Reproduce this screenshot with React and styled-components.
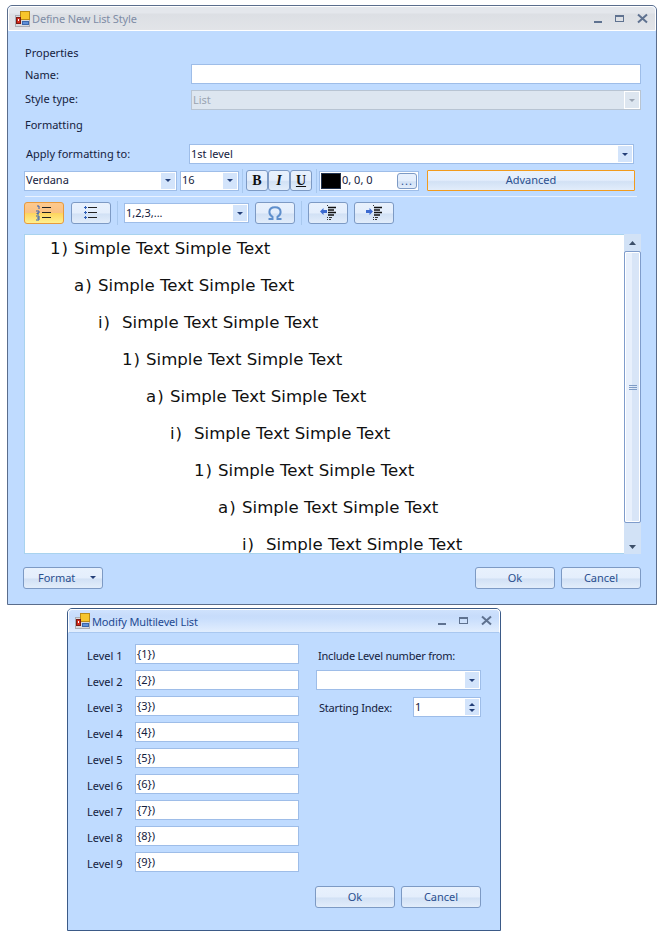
import React from "react";
import styled, { createGlobalStyle } from "styled-components";

const GlobalStyle = createGlobalStyle`
    html, body {
        margin: 0;
        padding: 0;
        background: #fff;
    }
    body {
        font-family: "Noto Sans", "Liberation Sans", sans-serif;
        font-size: 11px;
        color: #15233f;
    }
    * {
        box-sizing: border-box;
    }
`;

const Page = styled.div`
    width: 664px;
    height: 942px;
    padding-top: 5px;
    overflow: hidden;
`;

const Win = styled.div`
    width: ${(p) => p.$w}px;
    height: ${(p) => p.$h}px;
    margin-left: ${(p) => p.$x}px;
    margin-top: ${(p) => p.$top || 0}px;
    background: #bfdbff;
    border: 1px solid ${(p) => (p.$inactive ? "#5a6d8c" : "#3b5a87")};
    border-top-left-radius: 5px;
    border-top-right-radius: 5px;
    display: flex;
    flex-direction: column;
`;

const TitleBar = styled.div`
    height: ${(p) => p.$h}px;
    flex: none;
    display: flex;
    align-items: center;
    padding: 0 5px 0 6px;
    border: 1px solid #fff;
    border-bottom: 1px solid ${(p) => (p.$inactive ? "#fff" : "#a9c8f0")};
    border-top-left-radius: 4px;
    border-top-right-radius: 4px;
    background: ${(p) =>
        p.$inactive
            ? "linear-gradient(#e4e7ec 0, #e4e7ec 6px, #dcdfe4 7px, #e2e4e8 100%)"
            : "linear-gradient(#cfe2fd 0, #c7dcfb 6px, #c9defc 40%, #e2eefe 100%)"};
`;

const TitleText = styled.span`
    margin-left: 1px;
    font-size: 11px;
    letter-spacing: -0.15px;
    flex: 1;
    color: ${(p) => (p.$inactive ? "#7f8da6" : "#1f4a92")};
`;

const WinButtons = styled.div`
    display: flex;
    align-items: center;
    gap: 10px;
    svg {
        display: block;
    }
`;

const Body = styled.div`
    flex: 1;
    display: flex;
    flex-direction: column;
`;

const Label = styled.div`
    font-size: 11px;
    line-height: 14px;
    color: #14213d;
    letter-spacing: ${(p) => p.$ls || 0}px;
`;

const FieldRow = styled.div`
    display: flex;
    align-items: center;
    height: ${(p) => p.$h || 20}px;
    margin-top: ${(p) => p.$mt || 0}px;
    padding-left: ${(p) => p.$pl || 0}px;
    padding-right: ${(p) => p.$pr || 0}px;
`;

const LabelCell = styled(Label)`
    width: ${(p) => p.$w}px;
    flex: none;
    padding-top: ${(p) => p.$pt || 0}px;
    padding-bottom: ${(p) => p.$pb || 0}px;
`;

const Field = styled.div`
    width: ${(p) => (p.$w ? p.$w + "px" : "auto")};
    flex: ${(p) => (p.$w ? "none" : 1)};
    height: ${(p) => p.$h || 20}px;
    margin-left: ${(p) => p.$ml || 0}px;
    border: 1px solid ${(p) => (p.$disabled ? "#b8c4d2" : "#9ebde8")};
    background: ${(p) => (p.$disabled ? "#dde6f0" : "#fff")};
    color: ${(p) => (p.$disabled ? "#9aa4b2" : "#14213d")};
    display: flex;
    align-items: center;
    justify-content: space-between;
    font-size: 11px;
    padding-left: 1px;
    overflow: hidden;
`;

const FieldText = styled.span`
    margin-bottom: 2px;
`;

const ArrowCell = styled.div`
    width: 16px;
    height: 100%;
    flex: none;
    border: 1px solid #fff;
    background: ${(p) => (p.$disabled ? "#dde6f0" : "#d3e4fb")};
    display: flex;
    align-items: center;
    justify-content: center;
`;

const ArrowSvg = styled.svg`
    display: block;
    transform: ${(p) => (p.$up ? "rotate(180deg)" : "none")};
`;

const Arrow = ({ color = "#243f78", up, w = 6, h = 3 }) => (
    <ArrowSvg $up={up} width={w} height={h} viewBox="0 0 7 4" preserveAspectRatio="none">
        <path d="M0 0h7L3.5 4z" fill={color} />
    </ArrowSvg>
);

const Combo = ({ children, w, ml, h, disabled }) => (
    <Field $w={w} $ml={ml} $h={h} $disabled={disabled}>
        <FieldText>{children}</FieldText>
        <ArrowCell $disabled={disabled}>
            <Arrow color={disabled ? "#9aa4b2" : "#243f78"} />
        </ArrowCell>
    </Field>
);

const Btn = styled.div`
    width: ${(p) => p.$w}px;
    height: ${(p) => p.$h || 22}px;
    margin-left: ${(p) => p.$ml || 0}px;
    flex: none;
    border: 1px solid ${(p) => (p.$focus ? "#f29b1d" : p.$active ? "#e89a3c" : "#7d9ac4")};
    border-radius: ${(p) => (p.$focus ? 1 : 3)}px;
    background: ${(p) =>
        p.$active
            ? "linear-gradient(#fdc98e 0, #fbc282 48%, #fdd55f 52%, #fff08f 100%)"
            : "linear-gradient(#e8f1fd 0, #e4eefc 48%, #d2e1f5 56%, #e2edfb 100%)"};
    color: #2a4f8f;
    font-size: 11px;
    display: flex;
    align-items: center;
    justify-content: center;
`;

const TextBtn = styled(Btn)`
    padding-bottom: 2px;
`;

const FormatBtn = styled(TextBtn)`
    justify-content: space-between;
    padding-left: 14px;
    padding-right: 6px;
`;

const Sep = styled.div`
    width: 1px;
    height: 24px;
    flex: none;
    background: #a8c8ee;
    margin-left: ${(p) => p.$ml || 0}px;
`;

const Rule = styled.div`
    height: 1px;
    background: #e9f2ff;
    margin: 5px 19px 0 17px;
`;

const FontRow = styled.div`
    display: flex;
    align-items: center;
    height: 21px;
    margin-top: 6px;
    padding-left: 16px;
`;

const ToolRow = styled.div`
    display: flex;
    align-items: center;
    height: 22px;
    margin-top: 5px;
    padding-left: 16px;
`;

const StyleBtn = styled(Btn)`
    color: #111;
    font-family: "Liberation Serif", serif;
    font-size: 14px;
    font-weight: 700;
    font-style: ${(p) => (p.$italic ? "italic" : "normal")};
    text-decoration: ${(p) => (p.$under ? "underline" : "none")};
`;

const ColorBox = styled.div`
    width: 100px;
    height: 20px;
    margin-left: 2px;
    border: 1px solid #9ebde8;
    background: #fff;
    display: flex;
    align-items: center;
    padding-left: 1px;
    flex: none;
`;

const Swatch = styled.div`
    width: 20px;
    height: 16px;
    background: #000;
    border: 1px solid #23344f;
    margin-right: 1px;
`;

const ColorText = styled.span`
    flex: 1;
    font-size: 11px;
    color: #14213d;
    margin-bottom: 2px;
`;

const DotsBtn = styled(Btn)`
    margin-right: 1px;
    align-items: flex-end;
    padding-bottom: 2px;
    line-height: 10px;
    font-size: 11px;
    letter-spacing: 1px;
`;

const EditorRow = styled.div`
    display: flex;
    height: 320px;
    margin: 10px 15px 0 16px;
`;

const Editor = styled.div`
    flex: 1;
    background: #fff;
    border-top: 1px solid #a9d3ee;
    border-left: 1px solid #a9d3ee;
    border-bottom: 1px solid #a9d3ee;
    overflow: hidden;
`;

const ListLine = styled.div`
    display: flex;
    align-items: flex-start;
    height: 37px;
    padding-left: ${(p) => p.$indent}px;
    font-family: "DejaVu Sans", Verdana, sans-serif;
    font-size: 16.6px;
    line-height: 27px;
    color: #111;
    white-space: nowrap;
`;

const Marker = styled.span`
    width: 24px;
    margin-left: -1px;
    flex: none;
    letter-spacing: 1px;
`;

const ScrollBar = styled.div`
    width: 17px;
    flex: none;
    background: #d2e2f6;
    display: flex;
    flex-direction: column;
    align-items: stretch;
`;

const ScrollEnd = styled.div`
    height: ${(p) => p.$h}px;
    flex: none;
    display: flex;
    align-items: center;
    justify-content: center;
`;

const Thumb = styled.div`
    flex: 1;
    margin-bottom: 17px;
    border: 1px solid #7f9ccb;
    border-radius: 2px;
    box-shadow: inset 0 0 0 1px #fff;
    background: linear-gradient(90deg, #e8f0fc 0, #e8f0fc 50%, #d8e5f7 50%, #d8e5f7 100%);
    display: flex;
    align-items: center;
    justify-content: center;
`;

const Grip = styled.div`
    width: 8px;
    height: 5px;
    border-top: 1px solid #7f9cc6;
    border-bottom: 1px solid #7f9cc6;
    position: relative;
    &::after {
        content: "";
        position: absolute;
        left: 0;
        right: 0;
        top: 1px;
        height: 1px;
        background: #7f9cc6;
    }
`;

const Footer = styled.div`
    display: flex;
    margin-top: ${(p) => p.$mt}px;
    padding: ${(p) => p.$p};
`;

const Spacer = styled.div`
    flex: 1;
`;

const Levels = styled.div`
    width: 231px;
    flex: none;
    padding-left: 19px;
    display: flex;
    flex-direction: column;
    gap: 6px;
`;

const LevelRow = styled.div`
    display: flex;
    align-items: center;
    height: 20px;
`;

const LevelLabel = styled(Label)`
    width: 48px;
    flex: none;
    padding-top: 4px;
`;

const LevelInput = styled(Field)`
    width: 164px;
    flex: none;
    align-items: flex-start;
    padding-top: 1px;
`;

const Columns = styled.div`
    display: flex;
    margin-top: 11px;
`;

const RightCol = styled.div`
    display: flex;
    flex-direction: column;
    margin-left: 17px;
    width: 165px;
`;

const IncludeLabel = styled(Label)`
    margin: 5px 0 0 2px;
`;

const IncludeCombo = styled(Field)`
    flex: none;
    margin-top: 7px;
`;

const SpinArrows = styled.div`
    width: 16px;
    height: 100%;
    flex: none;
    border: 1px solid #fff;
    background: #d3e4fb;
    display: flex;
    flex-direction: column;
    align-items: center;
    justify-content: center;
    gap: 3px;
`;

const AppIcon = () => (
    <svg width="16" height="16" viewBox="0 0 16 16">
        <rect x="0.5" y="4.5" width="14" height="11" fill="#d8dade" stroke="#a9adb5" />
        <rect x="5.5" y="0.5" width="9" height="8" fill="#f7c52c" stroke="#b98a18" />
        <rect x="1.5" y="6.5" width="4" height="6" fill="#cf2a1c" stroke="#7c1a12" />
        <rect x="3" y="8" width="1" height="2" fill="#fff" />
        <rect x="7.5" y="10.5" width="6" height="3" fill="#5f90d8" stroke="#3a66aa" />
    </svg>
);

const WinControls = ({ color }) => (
    <WinButtons>
        <svg width="12" height="12" viewBox="0 0 12 12">
            <rect x="2" y="8" width="8" height="2" fill={color} />
        </svg>
        <svg width="12" height="12" viewBox="0 0 12 12">
            <rect x="1.5" y="2.5" width="8" height="6" fill="none" stroke={color} />
            <rect x="1" y="2" width="9" height="2" fill={color} />
        </svg>
        <svg width="14" height="12" viewBox="0 0 14 12">
            <path d="M2 1.5l9 8M11 1.5l-9 8" stroke={color} strokeWidth="2" fill="none" />
        </svg>
    </WinButtons>
);

const NumberedIcon = () => (
    <svg width="18" height="16" viewBox="0 0 18 16">
        <path d="M2 1h2v3M1 6h3v2H2v1h2M1 11h3v4H1M2 13h2" stroke="#2f5fb8" fill="none" />
        <path d="M7 2.5h9M7 7.5h9M7 12.5h9" stroke="#222" strokeWidth="1.2" />
    </svg>
);

const BulletIcon = () => (
    <svg width="18" height="16" viewBox="0 0 18 16">
        <path d="M3.5 1v3M2 2.5h3M3.5 6v3M2 7.5h3M3.5 11v3M2 12.5h3" stroke="#2f5fb8" />
        <path d="M6 2.5h9M6 7.5h9M6 12.5h9" stroke="#222" strokeWidth="1.2" />
    </svg>
);

const IndentLines = () => (
    <>
        <path d="M9 2.5h8M9 5h6M9 7.5h8M9 10h6" stroke="#111" strokeWidth="1.5" />
        <path d="M8.5 0v1M8.5 12v1M8.5 14v1M10 12.5h3M10 14.5h2" stroke="#333" />
    </>
);

const OutdentIcon = () => (
    <svg width="18" height="16" viewBox="0 0 18 16">
        <IndentLines />
        <path d="M1 6.5l3.5-3.5v2H8v3H4.5v2z" fill="#3c6ad0" />
    </svg>
);

const IndentIcon = () => (
    <svg width="18" height="16" viewBox="0 0 18 16">
        <IndentLines />
        <path d="M8 6.5L4.5 3v2H1v3h3.5v2z" fill="#3c6ad0" />
    </svg>
);

const levels = [
    ["1)", 26],
    ["a)", 50],
    ["i)", 74],
    ["1)", 98],
    ["a)", 122],
    ["i)", 146],
    ["1)", 170],
    ["a)", 194],
    ["i)", 218],
];

const App = () => (
    <Page>
        <GlobalStyle />
        <Win $x={7} $w={650} $h={600} $inactive>
            <TitleBar $h={25} $inactive>
                <AppIcon />
                <TitleText $inactive>Define New List Style</TitleText>
                <WinControls color="#5f7290" />
            </TitleBar>
            <Body>
                <FieldRow $h={14} $mt={15} $pl={17}>
                    <Label>Properties</Label>
                </FieldRow>
                <FieldRow $mt={4} $pl={17} $pr={15}>
                    <LabelCell $w={166} $pt={2}>Name:</LabelCell>
                    <Field />
                </FieldRow>
                <FieldRow $mt={6} $pl={17} $pr={15}>
                    <LabelCell $w={166} $pb={2}>Style type:</LabelCell>
                    <Combo disabled>List</Combo>
                </FieldRow>
                <FieldRow $h={14} $mt={8} $pl={17}>
                    <Label>Formatting</Label>
                </FieldRow>
                <FieldRow $mt={12} $pl={18} $pr={22}>
                    <LabelCell $w={163}>Apply formatting to:</LabelCell>
                    <Combo>1st level</Combo>
                </FieldRow>
                <FontRow>
                    <Combo w={153}>Verdana</Combo>
                    <Combo w={59} ml={3}>16</Combo>
                    <Sep $ml={3} />
                    <StyleBtn $w={22} $h={21} $ml={3}>B</StyleBtn>
                    <StyleBtn $w={22} $h={21} $italic>I</StyleBtn>
                    <StyleBtn $w={22} $h={21} $under>U</StyleBtn>
                    <Sep $ml={4} />
                    <ColorBox>
                        <Swatch />
                        <ColorText>0, 0, 0</ColorText>
                        <DotsBtn $w={20} $h={16}>...</DotsBtn>
                    </ColorBox>
                    <TextBtn $w={208} $h={21} $ml={8} $focus>Advanced</TextBtn>
                </FontRow>
                <Rule />
                <ToolRow>
                    <Btn $w={40} $active><NumberedIcon /></Btn>
                    <Btn $w={40} $ml={7}><BulletIcon /></Btn>
                    <Sep $ml={6} />
                    <Combo w={125} ml={6}>1,2,3,...</Combo>
                    <Btn $w={40} $ml={6}>
                        <svg width="16" height="14" viewBox="0 0 16 14">
                            <path d="M1.5 13h4v-2.2C3.4 9.6 2.4 8 2.4 6c0-3 2.3-4.8 5.6-4.8S13.6 3 13.6 6c0 2-1 3.6-3.1 4.8V13h4" fill="none" stroke="#5f8fcc" strokeWidth="2" />
                        </svg>
                    </Btn>
                    <Sep $ml={6} />
                    <Btn $w={40} $ml={6}><OutdentIcon /></Btn>
                    <Btn $w={40} $ml={6}><IndentIcon /></Btn>
                </ToolRow>
                <EditorRow>
                    <Editor>
                        {levels.map(([mark, indent], i) => (
                            <ListLine key={i} $indent={indent}>
                                <Marker>{mark}</Marker>
                                Simple Text Simple Text
                            </ListLine>
                        ))}
                    </Editor>
                    <ScrollBar>
                        <ScrollEnd $h={17}><Arrow up color="#3d4f68" w={7} h={4} /></ScrollEnd>
                        <Thumb><Grip /></Thumb>
                        <ScrollEnd $h={14}><Arrow color="#3d4f68" w={7} h={4} /></ScrollEnd>
                    </ScrollBar>
                </EditorRow>
                <Footer $mt={13} $p="0 15px">
                    <FormatBtn $w={80}>
                        <span>Format</span>
                        <Arrow />
                    </FormatBtn>
                    <Spacer />
                    <TextBtn $w={80}>Ok</TextBtn>
                    <TextBtn $w={80} $ml={6}>Cancel</TextBtn>
                </Footer>
            </Body>
        </Win>
        <Win $x={67} $w={434} $h={323} $top={3}>
            <TitleBar $h={24}>
                <AppIcon />
                <TitleText>Modify Multilevel List</TitleText>
                <WinControls color="#5f7290" />
            </TitleBar>
            <Body>
                <Columns>
                    <Levels>
                        {[1, 2, 3, 4, 5, 6, 7, 8, 9].map((n) => (
                            <LevelRow key={n}>
                                <LevelLabel>Level {n}</LevelLabel>
                                <LevelInput>{`{${n}})`}</LevelInput>
                            </LevelRow>
                        ))}
                    </Levels>
                    <RightCol>
                        <IncludeLabel $ls={-0.22}>Include Level number from:</IncludeLabel>
                        <IncludeCombo>
                            <span />
                            <ArrowCell><Arrow /></ArrowCell>
                        </IncludeCombo>
                        <FieldRow $h={20} $mt={7} $pl={3}>
                            <LabelCell $w={94} $ls={-0.2} $pt={2}>Starting Index:</LabelCell>
                            <Field $w={68}>
                                <FieldText>1</FieldText>
                                <SpinArrows>
                                    <Arrow up />
                                    <Arrow />
                                </SpinArrows>
                            </Field>
                        </FieldRow>
                    </RightCol>
                </Columns>
                <Footer $mt={14} $p="0 19px 0 247px">
                    <TextBtn $w={80}>Ok</TextBtn>
                    <TextBtn $w={80} $ml={6}>Cancel</TextBtn>
                </Footer>
            </Body>
        </Win>
    </Page>
);

export default App;
